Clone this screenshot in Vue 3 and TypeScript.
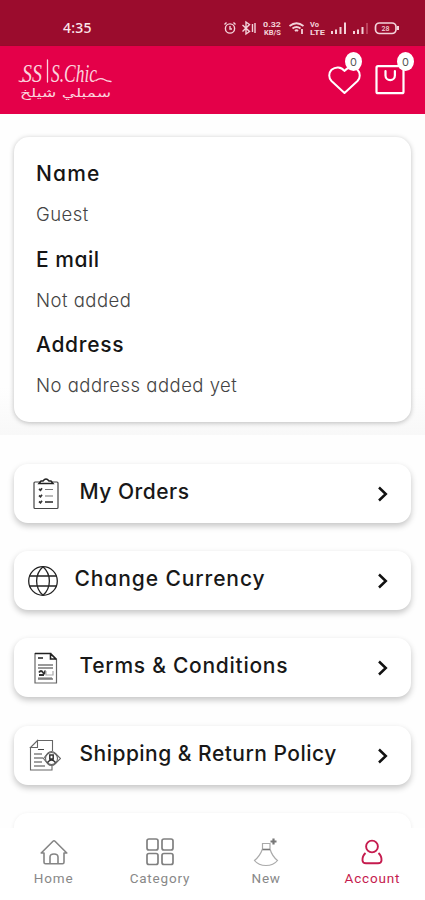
<script setup lang="ts">
interface InfoField {
  label: string
  value: string
  key: string
}
interface MenuItem {
  key: string
  label: string
}

const fields: InfoField[] = [
  { key: 'name', label: 'Name', value: 'Guest' },
  { key: 'email', label: 'E mail', value: 'Not added' },
  { key: 'address', label: 'Address', value: 'No address added yet' },
]

const menu: MenuItem[] = [
  { key: 'orders', label: 'My Orders' },
  { key: 'currency', label: 'Change Currency' },
  { key: 'terms', label: 'Terms & Conditions' },
  { key: 'shipping', label: 'Shipping & Return Policy' },
]

const tabs: MenuItem[] = [
  { key: 'home', label: 'Home' },
  { key: 'category', label: 'Category' },
  { key: 'new', label: 'New' },
  { key: 'account', label: 'Account' },
]
</script>

<template>
  <div class="screen">
    <div class="status">
      <span class="clock">4:35</span>
      <svg class="status-icons" width="178" height="18" viewBox="0 0 178 18" fill="none" stroke="#f3d3da" stroke-width="1.4">
        <circle cx="7" cy="9.500" r="4.600" />
        <path d="M7 7v3h2M1.500 5.500l2-2M12.500 5.500l-2-2" />
        <path d="M19.500 6l7 6.500-3.500 2.500V3l3.500 2.500-7 7M29.500 5v8M32 4v10" />
        <g class="rate" fill="#f3d3da" stroke="none">
          <text x="40" y="8" textLength="18" lengthAdjust="spacingAndGlyphs">0.32</text>
          <text x="41" y="16" textLength="17" lengthAdjust="spacingAndGlyphs">KB/S</text>
        </g>
        <path stroke-width="1.800" d="M66.500 7q7-5.500 14 0M69.500 9.500q4-3 8 0M72 12q1.500-1.500 3 0M79 10v5" />
        <g class="rate" fill="#f3d3da" stroke="none">
          <text x="87" y="8" textLength="9" lengthAdjust="spacingAndGlyphs">Vo</text>
          <text x="87" y="15.500" textLength="15" lengthAdjust="spacingAndGlyphs">LTE</text>
        </g>
        <path stroke-width="2" d="M109 12v3M113 10.500v4.500M117.500 8v7M122 3.500V15M131 12v3M135 10.500v4.500M139.500 8v7" />
        <path stroke="#c4526b" stroke-width="1.500" d="M144 4v11" />
        <rect x="152.500" y="4" width="20.500" height="10.500" rx="4" stroke-width="1.700" />
        <path stroke-width="2" d="M175 7v4" />
        <text class="level" x="158.500" y="11.700" fill="#f3d3da" stroke="none">28</text>
      </svg>
    </div>

    <header class="header">
      <svg class="logo" width="98" height="48" viewBox="0 0 98 48" fill="none" stroke="#fbd3dd" stroke-width="1.300" stroke-linecap="round">
        <g class="script" fill="#fbd3dd" stroke="none">
          <text x="4" y="24.500" textLength="20" lengthAdjust="spacingAndGlyphs">SS</text>
          <text x="33" y="24.500" textLength="46" lengthAdjust="spacingAndGlyphs">S.Chic</text>
        </g>
        <path d="M29.500 3v22M1 24q3 1.500 5-1M78 23.500q3-2.500 7-1.500 4 2.500 8 2.500" />
        <text class="arabic" x="93" y="39.500" textLength="91" lengthAdjust="spacingAndGlyphs" fill="#fbd3dd" stroke="none">سمبلي شيلخ</text>
      </svg>
      <div class="actions">
        <div class="action">
          <svg width="34" height="30" viewBox="0 0 34 30" fill="none" stroke="#fff" stroke-width="2" stroke-linejoin="round">
            <path d="M17.500 28L4.500 16C1.500 13 1.500 8 4.500 4.800 8.500 1.500 14 1.500 17.500 6 21 1.500 26.500 1.500 30.500 4.800c3 3.200 3 8.200 0 11.200z" />
          </svg>
          <span class="badge">0</span>
        </div>
        <div class="action">
          <svg width="30" height="30" viewBox="0 0 30 30" fill="none" stroke="#fff" stroke-width="2.200" stroke-linejoin="round">
            <rect x="1.500" y="1.200" width="27" height="27" rx="1.500" />
            <path stroke-linecap="round" d="M10.500 6v4.500a4.700 4.700 0 0 0 9.400 0V6" />
          </svg>
          <span class="badge">0</span>
        </div>
      </div>
    </header>

    <section class="profile">
      <div class="card">
        <div v-for="f in fields" :key="f.key" class="field" :class="f.key">
          <div class="label">{{ f.label }}</div>
          <div class="value">{{ f.value }}</div>
        </div>
      </div>
    </section>

    <main class="menu">
      <div v-for="m in menu" :key="m.key" class="row" :class="m.key">
        <svg v-if="m.key === 'orders'" class="icon" width="32" height="34" viewBox="0 0 32 34" fill="none" stroke="#444" stroke-width="1.200">
          <rect x="4" y="5" width="24" height="26.500" rx="1" />
          <path stroke="#222" stroke-width="1.500" fill="#fff" d="M9 6.500h14l-2-2.500h-2q-3-4-6 0h-2z" />
          <path stroke="#333" stroke-width="1.700" d="M9 12l1.500 1.200 1.500-2M9 18.500l1.500 1.200 1.500-2M9 24.500l1.500 1.200 1.500-2" />
          <path stroke="#777" d="M15 12.500h8M15 19h8" /><path stroke="#333" stroke-width="1.600" d="M15 25h8" />
        </svg>
        <svg v-else-if="m.key === 'currency'" class="icon" width="32" height="34" viewBox="0 0 32 34" fill="none" stroke="#222" stroke-width="1.300">
          <circle cx="16" cy="17" r="14.300" />
          <path d="M2.500 12h27M2.500 22h27M16 2.700c-8.500 7.500-8.500 21 0 28.600M16 2.700c8.500 7.500 8.500 21 0 28.600" />
        </svg>
        <svg v-else-if="m.key === 'terms'" class="icon" width="32" height="34" viewBox="0 0 32 34" fill="none" stroke="#666" stroke-width="1.200">
          <path d="M5 2.500h15.500l6 6v23.500H5z" />
          <path stroke="#222" stroke-width="1.600" d="M5 2.500h15.500V8h6M8 7h5M20.500 2.500l6 6" />
          <path stroke="#999" stroke-width="2" d="M8 14h15M8 17h15M8 28h15" />
          <path stroke="#333" stroke-width="1.800" d="M9 21.500q2-3 4 0t2-2M9 24h5" />
          <path d="M16 20v4h7v-4" stroke="#aaa" /><path stroke-width="1" d="M8 27h14" />
        </svg>
        <svg v-else class="icon" width="32" height="34" viewBox="0 0 32 34" fill="none" stroke="#666" stroke-width="1.100">
          <path d="M8.500 2.500h15V13M1.500 9v23H23v-4M8.500 2.500l-7 7h7z" />
          <path stroke="#444" d="M9 11.500h6M5 16h8M5 20h9M5 24h8M5 28h11" />
          <path d="M14.500 20.500l4-5q4-4 8 0l5 5-5 5q-4 4-8 0z" fill="#fff" />
          <circle cx="22.500" cy="20.500" r="6" />
          <path stroke="#333" stroke-width="1.500" d="M20.800 17h3.400v4h-3.400zM18.500 24.500q4-5 8 0" />
        </svg>
        <span class="text">{{ m.label }}</span>
        <svg class="chevron" width="12" height="16" viewBox="0 0 12 16" fill="none" stroke="#111" stroke-width="2.500">
          <path d="M2 1.500L8.800 8 2 14.500" />
        </svg>
      </div>
      <div class="row next"></div>
    </main>

    <nav class="tabs">
      <div v-for="t in tabs" :key="t.key" class="tab" :class="t.key">
        <svg v-if="t.key === 'home'" width="30" height="30" viewBox="0 0 30 30" fill="none" stroke="#858585" stroke-width="1.600" stroke-linejoin="round">
          <path d="M5 16H2.200L14 4.200q1-1 2 0L27.800 16H25v9.200q0 1.500-1.500 1.500h-17Q5 26.700 5 25.200zM11 26.500V20q0-3 4-3t4 3v6.500" />
        </svg>
        <svg v-else-if="t.key === 'category'" width="30" height="30" viewBox="0 0 30 30" fill="none" stroke="#808080" stroke-width="1.700">
          <rect x="2" y="2" width="11" height="11" rx="2" /><rect x="17" y="2" width="11" height="11" rx="2" />
          <rect x="2" y="16.500" width="11" height="11" rx="2" /><rect x="17" y="16.500" width="11" height="11" rx="2" />
        </svg>
        <svg v-else-if="t.key === 'new'" width="30" height="30" viewBox="0 0 30 30" fill="none" stroke="#aaa" stroke-width="1.200">
          <path d="M11.500 12V6.500H19V12M11.500 12Q9 19 3.500 23.500q4 5 11.500 5t11.500-5Q21 19 19 12" />
          <path stroke="#777" stroke-width="2.200" d="M22.500 1.500v6M19.500 4.500h6" />
          <path stroke="#777" stroke-width="1.600" d="M11.500 12.500H19" />
        </svg>
        <svg v-else width="30" height="30" viewBox="0 0 30 30" fill="none" stroke="#c51b4e" stroke-width="1.900">
          <circle cx="15" cy="9.500" r="5.900" />
          <path d="M8.500 16Q5.200 19 5.500 23.500q.2 2.800 3.500 2.800h12q3.300 0 3.500-2.800.3-4.500-3-7.500" />
        </svg>
        <span>{{ t.label }}</span>
      </div>
    </nav>
  </div>
</template>

<style>
body { margin: 0; background: #fff; }
</style>

<style scoped>
.screen {
  width: 425px;
  height: 900px;
  display: flex;
  flex-direction: column;
  overflow: hidden;
  background: #fefefe;
  font-family: Inter, "Open Sans", sans-serif;
  font-feature-settings: "cv11";
}
.status {
  flex: none;
  height: 46px;
  box-sizing: border-box;
  padding: 9px 24px 0 63px;
  display: flex;
  align-items: center;
  justify-content: space-between;
  background: #9b0c2d;
}
.clock { color: #fbe6ea; font: 500 14px "Noto Sans", sans-serif; letter-spacing: 0.2px; }
.rate { font: 700 7px Roboto, sans-serif; }
.level { font: 500 7px Roboto, sans-serif; }
.header {
  flex: none;
  height: 68px;
  box-sizing: border-box;
  padding: 11px 20px 0 18px;
  display: flex;
  justify-content: space-between;
  align-items: flex-start;
  background: #e40049;
  box-shadow: 0 1px 2px rgba(0, 0, 0, 0.35);
}
.logo { overflow: visible; }
.script { font: italic 25px "Liberation Serif", serif; }
.arabic { font: 12px "DejaVu Sans", sans-serif; direction: rtl; }
.actions { display: flex; gap: 14px; padding-top: 8px; }
.action { position: relative; height: 30px; }
.action svg { display: block; }
.badge {
  position: absolute;
  right: -9px;
  top: -13px;
  width: 17px;
  height: 19px;
  border-radius: 50%;
  background: #fff;
  color: #555;
  font: 11px/20px Inter, sans-serif;
  text-align: center;
}
.action:first-child .badge { right: -1px; }
.profile {
  flex: none;
  height: 321px;
  box-sizing: border-box;
  padding: 23px 14px 0;
  background: linear-gradient(#fefefe 85%, #f8f8f8);
}
.card {
  height: 285px;
  box-sizing: border-box;
  padding: 23px 22px 0;
  border-radius: 15px;
  background: #fff;
  box-shadow: 0 1px 5px rgba(0, 0, 0, 0.25);
}
.field { height: 85.500px; color: #151515; white-space: nowrap; }
.label { font-size: 21px; font-weight: 500; line-height: 28px; letter-spacing: 0.700px; }
.name .label { letter-spacing: 1.200px; }
.email .label { letter-spacing: 0.500px; }
.value { margin-top: 14px; font-size: 18.500px; font-weight: 300; line-height: 24px; letter-spacing: 0.480px; color: #444; }
.menu {
  flex: 1;
  min-height: 0;
  overflow: hidden;
  padding: 29px 14px 0;
  display: flex;
  flex-direction: column;
  gap: 28.200px;
  background: #fefefe;
}
.row {
  flex: none;
  height: 59px;
  box-sizing: border-box;
  padding: 0 22px 0 16px;
  display: flex;
  align-items: center;
  border-radius: 14px;
  background: #fff;
  box-shadow: 0 3px 6px rgba(0, 0, 0, 0.23);
  white-space: nowrap;
}
.currency { padding-left: 13px; }
.shipping { padding-left: 15px; }
.text {
  margin: -3px auto 0 17.500px;
  font-size: 21px;
  font-weight: 450;
  line-height: 30px;
  letter-spacing: 0.500px;
  color: #181818;
}
.currency .text { margin-left: 15.500px; letter-spacing: 0.900px; }
.terms .text { letter-spacing: 0.720px; }
.shipping .text { margin-left: 18.500px; letter-spacing: 0.480px; }
.chevron { margin-top: 1px; }
.next { box-shadow: 0 1px 4px rgba(0, 0, 0, 0.08); }
.tabs {
  flex: none;
  height: 72px;
  display: grid;
  grid-template-columns: repeat(4, 1fr);
  background: #fff;
}
.tab {
  padding-top: 9px;
  display: flex;
  flex-direction: column;
  align-items: center;
  color: #888;
  font: 400 13.500px/16px Roboto, sans-serif;
  letter-spacing: 0.800px;
}
.tab span { margin: 3px 0 0 1px; }
.tab svg { margin-left: 1px; }
.account { color: #c51b4e; }
</style>
